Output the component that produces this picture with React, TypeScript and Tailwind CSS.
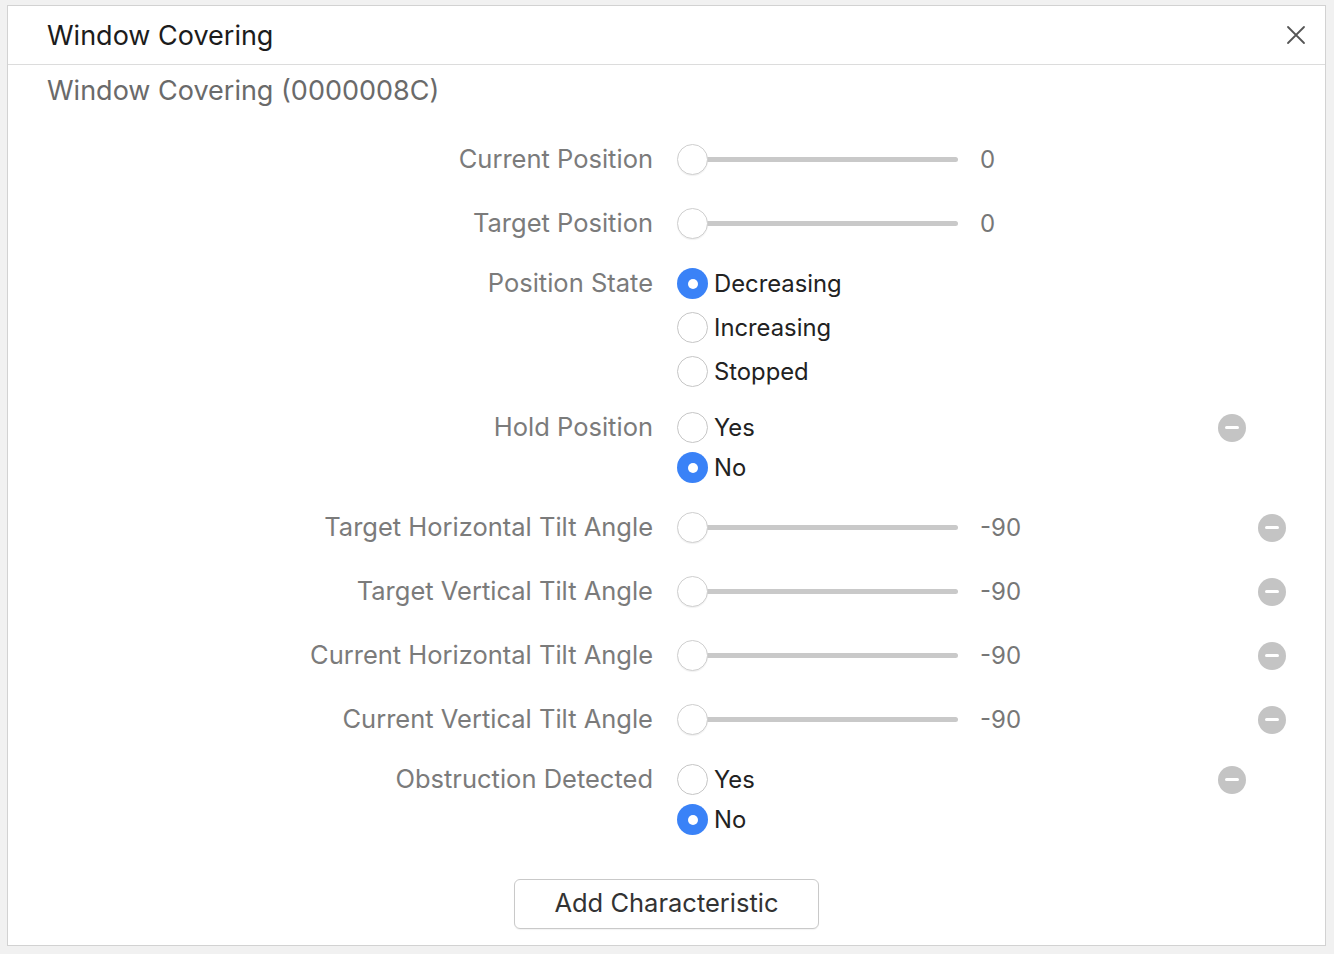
import React from 'react';

const font = { fontFamily: 'Inter, "Noto Sans", sans-serif' };

const MinusButton: React.FC<{ className?: string }> = ({ className = '' }) => (
  <div className={`w-[28px] h-[28px] rounded-full bg-[#c4c4c4] flex items-center justify-center shrink-0 ${className}`}>
    <div className="w-[14px] h-[3px] bg-white rounded-sm" />
  </div>
);

const Radio: React.FC<{ checked?: boolean }> = ({ checked }) =>
  checked ? (
    <div className="w-[31px] h-[31px] rounded-full bg-[#3a82f7] flex items-center justify-center shrink-0">
      <div className="w-[10px] h-[10px] rounded-full bg-white" />
    </div>
  ) : (
    <div className="w-[31px] h-[31px] rounded-full bg-white border border-[#c6c6c6] shrink-0" />
  );

const Label: React.FC<{ text: string; h: string }> = ({ text, h }) => (
  <div className={`w-[669px] shrink-0 pr-[24px] text-right text-[25.5px] text-[#7b7b7b] flex items-center justify-end ${h}`}>{text}</div>
);

const SliderRow: React.FC<{ label: string; value: string; removable?: boolean }> = ({ label, value, removable }) => (
  <div className="flex items-center h-[64px]">
    <Label text={label} h="h-[64px]" />
    <div className="relative w-[281px] h-[31px] flex items-center">
      <div className="absolute left-[15px] right-0 h-[5px] rounded-full bg-[#c9c9c9]" />
      <div className="relative w-[31px] h-[31px] rounded-full bg-white border border-[#cfcfcf] shadow-[0_1px_1px_rgba(0,0,0,0.06)]" />
    </div>
    <div className="ml-[22px] text-[24px] text-[#777]">{value}</div>
    {removable && <MinusButton className="ml-auto mr-[39px]" />}
  </div>
);

const RadioGroup: React.FC<{ label: string; options: string[]; selected: number; rowH: string; removable?: boolean }> = ({
  label,
  options,
  selected,
  rowH,
  removable,
}) => (
  <div className="flex items-start">
    <Label text={label} h={rowH} />
    <div className="flex flex-col">
      {options.map((o, i) => (
        <div key={o} className={`flex items-center gap-[6px] ${rowH}`}>
          <Radio checked={i === selected} />
          <span className="text-[23.8px] text-[#222]">{o}</span>
        </div>
      ))}
    </div>
    {removable && (
      <div className={`ml-auto mr-[79px] flex items-center ${rowH}`}>
        <MinusButton />
      </div>
    )}
  </div>
);

export default function App() {
  return (
    <div className="min-h-[954px] w-[1334px] bg-[#f1f1f1] pt-[5px] pl-[7px]" style={font}>
      <div className="w-[1319px] h-[941px] bg-white border border-[#d2d2d2] flex flex-col">
        <div className="h-[59px] border-b border-[#dcdcdc] flex items-center pl-[39px] pr-[19px]">
          <span className="mt-[3px] text-[27px] text-[#1c1c1c]">Window Covering</span>
          <svg className="ml-auto mb-[1px]" width="20" height="20" viewBox="0 0 20 20">
            <path d="M2 2 L18 18 M18 2 L2 18" stroke="#555" strokeWidth="1.8" strokeLinecap="round" />
          </svg>
        </div>
        <div className="pl-[39px] pt-[6px] text-[27px] text-[#6a6a6a]">Window Covering (0000008C)</div>

        <div className="mt-[16px] flex flex-col">
          <SliderRow label="Current Position" value="0" />
          <SliderRow label="Target Position" value="0" />
          <div className="mt-[6px]">
            <RadioGroup label="Position State" options={['Decreasing', 'Increasing', 'Stopped']} selected={0} rowH="h-[44px]" />
          </div>
          <div className="mt-[14px]">
            <RadioGroup label="Hold Position" options={['Yes', 'No']} selected={1} rowH="h-[40px]" removable />
          </div>
          <div className="mt-[8px]">
            <SliderRow label="Target Horizontal Tilt Angle" value="-90" removable />
            <SliderRow label="Target Vertical Tilt Angle" value="-90" removable />
            <SliderRow label="Current Horizontal Tilt Angle" value="-90" removable />
            <SliderRow label="Current Vertical Tilt Angle" value="-90" removable />
          </div>
          <div className="mt-[8px]">
            <RadioGroup label="Obstruction Detected" options={['Yes', 'No']} selected={1} rowH="h-[40px]" removable />
          </div>
          <div className="mt-[39px] flex">
            <button className="ml-[506px] w-[305px] h-[50px] rounded-[6px] border border-[#c9c9c9] bg-white text-[25.5px] text-[#333] shadow-[0_1px_1px_rgba(0,0,0,0.05)]">
              Add Characteristic
            </button>
          </div>
        </div>
      </div>
    </div>
  );
}
